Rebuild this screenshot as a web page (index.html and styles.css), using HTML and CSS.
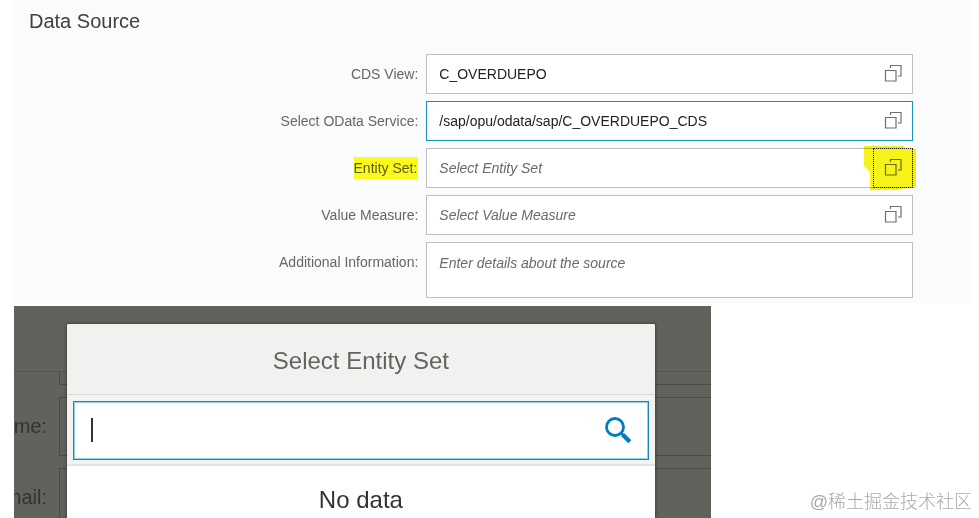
FILE: index.html
```
<!DOCTYPE html>
<html lang="en">
<head>
    <meta charset="UTF-8">
    <meta name="viewport" content="width=device-width, initial-scale=1.0">
    <title>Data Source</title>
    <link rel="stylesheet" href="styles.css">
</head>
<body>
    <svg class="icon-defs" aria-hidden="true">
        <symbol id="valueHelp" viewBox="0 0 18 18">
            <path d="M1.5 6.500h10.500v10.500h-10.500zM6.500 4V1.500h10.500v10.500H14" fill="none" stroke="currentColor" stroke-width="1.200"/>
        </symbol>
    </svg>

    <section class="source-panel">
        <h2 class="panel-title">Data Source</h2>
        <form class="source-form">
            <label for="cdsView">CDS View:</label>
            <div class="field">
                <input type="text" id="cdsView" value="C_OVERDUEPO">
                <button type="button" class="help-btn" aria-label="Choose CDS view"><svg><use href="#valueHelp"/></svg></button>
            </div>

            <label for="odataService">Select OData Service:</label>
            <div class="field active">
                <input type="text" id="odataService" value="/sap/opu/odata/sap/C_OVERDUEPO_CDS">
                <button type="button" class="help-btn" aria-label="Choose OData service"><svg><use href="#valueHelp"/></svg></button>
            </div>

            <label for="entitySet"><mark>Entity Set:</mark></label>
            <div class="field">
                <input type="text" id="entitySet" placeholder="Select Entity Set">
                <button type="button" class="help-btn focused" aria-label="Choose entity set"><svg><use href="#valueHelp"/></svg></button>
                <svg class="marker" viewBox="0 0 52 44" aria-hidden="true">
                    <path d="M0 0h40v3h12v39H41l-6 2H6V26L0 20z" fill="#f6f31a"/>
                </svg>
            </div>

            <label for="valueMeasure">Value Measure:</label>
            <div class="field">
                <input type="text" id="valueMeasure" placeholder="Select Value Measure">
                <button type="button" class="help-btn" aria-label="Choose value measure"><svg><use href="#valueHelp"/></svg></button>
            </div>

            <label for="additionalInfo">Additional Information:</label>
            <div class="field">
                <textarea id="additionalInfo" placeholder="Enter details about the source"></textarea>
            </div>
        </form>
    </section>

    <section class="dialog-area">
        <!-- Dimmed form behind the dialog -->
        <div class="dimmed-form">
            <div class="dimmed-row first"><span class="dimmed-label"></span><span class="dimmed-box"></span></div>
            <div class="dimmed-row"><span class="dimmed-label">Name:</span><span class="dimmed-box"></span></div>
            <div class="dimmed-row"><span class="dimmed-label">Email:</span><span class="dimmed-box"></span></div>
        </div>

        <div class="dialog" role="dialog" aria-labelledby="dialogTitle">
            <h2 class="dialog-title" id="dialogTitle">Select Entity Set</h2>
            <div class="search-bar">
                <div class="search-box">
                    <span class="caret"></span>
                    <input type="text" aria-label="Search">
                    <button type="button" class="search-btn" aria-label="Search">
                        <svg viewBox="0 0 28 28">
                            <circle cx="11" cy="11" r="8.500" fill="none" stroke="#007cc0" stroke-width="2.800"/>
                            <path d="M17 17l3 3" stroke="#007cc0" stroke-width="3"/>
                            <path d="M18.800 18.800l7 7" stroke="#007cc0" stroke-width="4.400"/>
                        </svg>
                    </button>
                </div>
            </div>
            <div class="no-data">No data</div>
        </div>
    </section>

    <div class="watermark" lang="zh">@稀土掘金技术社区</div>
</body>
</html>
```
FILE: styles.css
```
* {
    margin: 0;
    padding: 0;
    box-sizing: border-box;
    font-family: "Liberation Sans", Arial, sans-serif;
}
body {
    display: flex;
    flex-direction: column;
    gap: 3px;
    min-height: 100vh;
    background-color: white;
}
.icon-defs {
    display: none;
}

/* Data source form */
.source-panel {
    margin: 0 7px 0 13px;
    padding: 9px 59px 5px 16px;
    background-color: #fafbfd;
}
.panel-title {
    margin-bottom: 21px;
    font-size: 20px;
    font-weight: normal;
    line-height: 24px;
    color: #404040;
}
.source-form {
    display: grid;
    grid-template-columns: 4fr 5fr;
    gap: 7px 8px;
}
.source-form label {
    font-size: 14px;
    line-height: 40px;
    text-align: right;
    color: #666;
}
mark {
    padding: 3px 1px 3px 0;
    background-color: #fbf91d;
    color: #5a5a14;
}
.field {
    position: relative;
    display: flex;
    min-height: 40px;
    border: 1px solid #bfbfbf;
    background-color: white;
}
.field.active {
    border-color: #1a93b8;
}
.field input,
.field textarea {
    flex: 1;
    min-width: 0;
    padding: 0 12px;
    border: none;
    outline: none;
    background: none;
    font-size: 14px;
    color: #222;
}
.field textarea {
    height: 54px;
    padding-top: 11px;
    line-height: 18px;
    resize: none;
}
.field ::placeholder {
    font-style: italic;
    color: #6a6a6a;
}
.help-btn {
    width: 40px;
    margin: -1px;
    padding-bottom: 2px;
    border: 1px solid transparent;
    background: none;
    color: #707070;
    cursor: pointer;
}
.help-btn svg {
    display: block;
    width: 18px;
    height: 18px;
    margin: 0 auto;
}
.help-btn.focused {
    border: 1px dotted #222;
}
.marker {
    position: absolute;
    top: -3px;
    right: -4px;
    width: 52px;
    height: 44px;
    mix-blend-mode: multiply;
    pointer-events: none;
}

/* Dialog over the dimmed form */
.dialog-area {
    position: relative;
    flex: 1;
    width: 72.6%;
    min-height: 212px;
    padding-left: 14px;
    overflow: hidden;
}
.dimmed-form {
    height: 100%;
    padding-top: 65px;
    background-color: #62615c;
}
.dimmed-row {
    display: flex;
    height: 59px;
    margin-bottom: 12px;
}
.dimmed-row.first {
    height: 14px;
    border-top: 1px solid #54534e;
}
.dimmed-label {
    display: flex;
    justify-content: flex-end;
    width: 33px;
    margin-right: 12px;
    overflow: hidden;
    font-size: 20px;
    line-height: 59px;
    color: #34332f;
}
.dimmed-box {
    flex: 1;
    border: 1px solid #4b4a46;
    border-right: none;
}
.first .dimmed-box {
    border-top: none;
}
.dialog {
    position: absolute;
    top: 18px;
    right: 56px;
    bottom: 0;
    left: 67px;
    border-radius: 2px 2px 0 0;
    background-color: white;
    box-shadow: 0 0 3px 1px rgba(0,0,0,0.3);
}
.dialog-title {
    height: 71px;
    border-bottom: 1px solid #dadada;
    border-radius: 2px 2px 0 0;
    background-color: #f2f1ef;
    font-size: 24px;
    font-weight: normal;
    line-height: 74px;
    text-align: center;
    color: #666460;
}
.search-bar {
    padding: 6px 6px 4px;
    border-bottom: 2px solid #e4e4e2;
    background-color: #f4f3f1;
}
.search-box {
    display: flex;
    align-items: center;
    height: 59px;
    padding: 0 16px 2px 17px;
    border: 1px solid #1a86b4;
    background-color: white;
    box-shadow: inset 0 0 0 1px #8fd4ee;
}
.caret {
    width: 2px;
    height: 24px;
    background-color: #333;
}
.search-box input {
    flex: 1;
    min-width: 0;
    border: none;
    outline: none;
    background: none;
    font-size: 24px;
}
.search-btn {
    width: 28px;
    height: 28px;
    border: none;
    background: none;
    cursor: pointer;
}
.search-btn svg {
    display: block;
    width: 28px;
    height: 28px;
}
.no-data {
    padding-top: 20px;
    font-size: 24px;
    line-height: 28px;
    text-align: center;
    color: #333;
}

.watermark {
    position: absolute;
    right: 7px;
    bottom: 4px;
    font-family: "Liberation Sans", "Noto Sans CJK SC", sans-serif;
    font-size: 18px;
    font-weight: 300;
    line-height: 24px;
    color: #a8a8a8;
}
```
